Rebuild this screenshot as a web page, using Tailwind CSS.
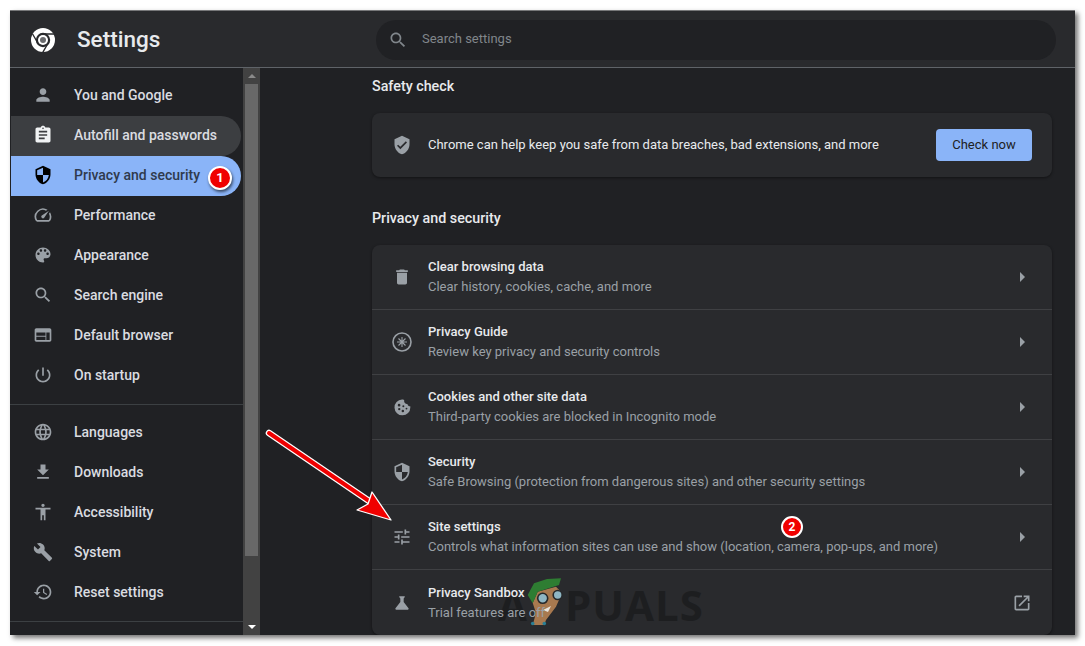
<!DOCTYPE html>
<html lang="en">
<head>
    <meta charset="UTF-8">
    <title>Settings</title>
    <script src="https://cdn.jsdelivr.net/npm/@tailwindcss/browser@4"></script>
</head>
<body class="bg-white font-['Roboto',sans-serif] overflow-hidden">
<div class="pt-[10px] pl-[10px] h-[646px] w-[1085px]">
    <div class="relative w-[1065px] h-[625px] bg-[#202124] border-t border-t-[#77787a] shadow-[3px_3px_5px_rgba(0,0,0,0.55)] overflow-hidden flex flex-col">

        <!-- header -->
        <header class="h-[57px] shrink-0 bg-[#292a2d] border-b border-b-[#5f6368] flex items-center pt-[2px]">
            <svg class="ml-[21px] w-6 h-6 shrink-0" viewBox="0 0 24 24">
                <circle cx="12" cy="12" r="12" fill="#fff"/>
                <path d="M12 6 L23 6 M6.8 15 L1.3 5.5 M17.2 15 L11.7 24.5" stroke="#292a2d" stroke-width="1.4" fill="none"/>
                <circle cx="12" cy="12" r="7.2" fill="#292a2d"/>
                <circle cx="12" cy="12" r="5" fill="#fff"/>
                <circle cx="12" cy="12" r="3" fill="#6a6b6e"/>
            </svg>
            <h1 class="ml-[22px] w-[299px] text-[22.5px] font-medium text-[#e8eaed]">Settings</h1>
            <div class="w-[680px] h-10 rounded-full bg-[#202124] flex items-center pl-[12px]">
                <svg class="w-5 h-5 fill-[#80868b]" viewBox="0 0 24 24"><path d="M15.5 14h-.79l-.28-.27C15.41 12.59 16 11.11 16 9.5 16 5.91 13.09 3 9.5 3S3 5.91 3 9.5 5.91 16 9.5 16c1.61 0 3.09-.59 4.23-1.57l.27.28v.79l5 4.99L20.49 19l-4.99-5zm-6 0C7.01 14 5 11.99 5 9.5S7.01 5 9.5 5 14 7.01 14 9.5 11.99 14 9.5 14z"/></svg>
                <span class="ml-[14px] mb-[2px] text-[13px] text-[#80868b]">Search settings</span>
            </div>
        </header>

        <div class="flex flex-1 min-h-0">
            <!-- sidebar -->
            <nav class="w-[233px] shrink-0 pt-[8px] pr-[2px]">
                <a class="flex items-center h-10 rounded-r-full pb-[2px] pl-[23px] text-[14px] font-medium text-[#dadce0]">
                    <svg class="w-5 h-5 mr-[21px] fill-[#9aa0a6]" viewBox="0 0 24 24"><path d="M12 12c2.21 0 4-1.79 4-4s-1.79-4-4-4-4 1.79-4 4 1.79 4 4 4zm0 2c-2.67 0-8 1.34-8 4v2h16v-2c0-2.66-5.33-4-8-4z"/></svg>You and Google</a>
                <a class="ml-px flex items-center h-10 rounded-r-full pb-[2px] pl-[22px] text-[14px] font-medium text-[#dadce0] bg-[#3c3e41]">
                    <svg class="w-5 h-5 mr-[21px] fill-[#f1f3f4]" viewBox="0 0 24 24"><path d="M19 3h-4.18C14.4 1.84 13.3 1 12 1c-1.3 0-2.4.84-2.82 2H5c-1.1 0-2 .9-2 2v14c0 1.1.9 2 2 2h14c1.1 0 2-.9 2-2V5c0-1.1-.9-2-2-2zm-7 0c.55 0 1 .45 1 1s-.45 1-1 1-1-.45-1-1 .45-1 1-1zm2 14H7v-2h7v2zm3-4H7v-2h10v2zm0-4H7V7h10v2z"/></svg>Autofill and passwords</a>
                <a class="ml-px flex items-center h-10 rounded-r-full pb-[2px] pl-[22px] text-[14px] font-medium text-[#2f3a4d] bg-[#8ab4f8]">
                    <svg class="w-5 h-5 mr-[21px] fill-black" viewBox="0 0 24 24"><path d="M12 1L3 5v6c0 5.55 3.84 10.74 9 12 5.16-1.26 9-6.45 9-12V5l-9-4zm0 10.99h7c-.53 4.12-3.28 7.79-7 8.94V12H5V6.3l7-3.11v8.8z"/></svg>Privacy and security</a>
                <a class="flex items-center h-10 rounded-r-full pb-[2px] pl-[23px] text-[14px] font-medium text-[#dadce0]">
                    <svg class="w-5 h-5 mr-[21px] fill-[#9aa0a6]" viewBox="0 0 24 24"><path d="M20.38 8.57l-1.23 1.85a8 8 0 0 1-.22 7.58H5.07A8 8 0 0 1 15.58 6.85l1.85-1.23A10 10 0 0 0 3.35 19a2 2 0 0 0 1.72 1h13.85a2 2 0 0 0 1.74-1 10 10 0 0 0-.27-10.44zm-9.79 6.84a2 2 0 0 0 2.83 0l5.66-8.49-8.49 5.66a2 2 0 0 0 0 2.83z"/></svg>Performance</a>
                <a class="flex items-center h-10 rounded-r-full pb-[2px] pl-[23px] text-[14px] font-medium text-[#dadce0]">
                    <svg class="w-5 h-5 mr-[21px] fill-[#9aa0a6]" viewBox="0 0 24 24"><path d="M12 3c-4.97 0-9 4.03-9 9s4.03 9 9 9c.83 0 1.5-.67 1.5-1.5 0-.39-.15-.74-.39-1.01-.23-.26-.38-.61-.38-.99 0-.83.67-1.5 1.5-1.5H16c2.76 0 5-2.24 5-5 0-4.42-4.03-8-9-8zm-5.5 9c-.83 0-1.5-.67-1.5-1.5S5.67 9 6.5 9 8 9.67 8 10.5 7.33 12 6.5 12zm3-4C8.67 8 8 7.33 8 6.5S8.67 5 9.5 5s1.5.67 1.5 1.5S10.33 8 9.5 8zm5 0c-.83 0-1.5-.67-1.5-1.5S13.67 5 14.5 5s1.5.67 1.5 1.5S15.33 8 14.5 8zm3 4c-.83 0-1.5-.67-1.5-1.5S16.67 9 17.5 9s1.5.67 1.5 1.5-.67 1.5-1.5 1.5z"/></svg>Appearance</a>
                <a class="flex items-center h-10 rounded-r-full pb-[2px] pl-[23px] text-[14px] font-medium text-[#dadce0]">
                    <svg class="w-5 h-5 mr-[21px] fill-[#9aa0a6]" viewBox="0 0 24 24"><path d="M15.5 14h-.79l-.28-.27C15.41 12.59 16 11.11 16 9.5 16 5.91 13.09 3 9.5 3S3 5.91 3 9.5 5.91 16 9.5 16c1.61 0 3.09-.59 4.23-1.57l.27.28v.79l5 4.99L20.49 19l-4.99-5zm-6 0C7.01 14 5 11.99 5 9.5S7.01 5 9.5 5 14 7.01 14 9.5 11.99 14 9.5 14z"/></svg>Search engine</a>
                <a class="flex items-center h-10 rounded-r-full pb-[2px] pl-[23px] text-[14px] font-medium text-[#dadce0]">
                    <svg class="w-5 h-5 mr-[21px] fill-[#9aa0a6]" viewBox="0 0 24 24"><path d="M20 4H4c-1.1 0-1.99.9-1.99 2L2 18c0 1.1.9 2 2 2h16c1.1 0 2-.9 2-2V6c0-1.1-.9-2-2-2zm-5 14H4v-4h11v4zm0-5H4V9h11v4zm5 5h-4V9h4v9z"/></svg>Default browser</a>
                <a class="flex items-center h-10 rounded-r-full pb-[2px] pl-[23px] text-[14px] font-medium text-[#dadce0]">
                    <svg class="w-5 h-5 mr-[21px] fill-[#9aa0a6]" viewBox="0 0 24 24"><path d="M13 3h-2v10h2V3zm4.83 2.17l-1.42 1.42C17.99 7.86 19 9.81 19 12c0 3.87-3.13 7-7 7s-7-3.13-7-7c0-2.19 1.01-4.14 2.58-5.42L6.17 5.17C4.23 6.82 3 9.26 3 12c0 4.97 4.03 9 9 9s9-4.03 9-9c0-2.74-1.23-5.18-3.17-6.83z"/></svg>On startup</a>

                <div class="mt-[8px] mb-[7px] -mr-[2px] h-px bg-[#3c4043]"></div>

                <a class="flex items-center h-10 rounded-r-full pl-[23px] text-[14px] font-medium text-[#dadce0]">
                    <svg class="w-5 h-5 mr-[21px] fill-[#9aa0a6]" viewBox="0 0 24 24"><path d="M11.99 2C6.47 2 2 6.48 2 12s4.47 10 9.99 10C17.52 22 22 17.52 22 12S17.52 2 11.99 2zm6.93 6h-2.95c-.32-1.25-.78-2.45-1.38-3.56 1.84.63 3.37 1.91 4.33 3.56zM12 4.04c.83 1.2 1.48 2.53 1.91 3.96h-3.82c.43-1.43 1.08-2.76 1.91-3.96zM4.26 14C4.1 13.36 4 12.69 4 12s.1-1.36.26-2h3.38c-.08.66-.14 1.32-.14 2 0 .68.06 1.34.14 2H4.26zm.82 2h2.95c.32 1.25.78 2.45 1.38 3.56-1.84-.63-3.37-1.9-4.33-3.56zm2.95-8H5.08c.96-1.66 2.49-2.93 4.33-3.56C8.81 5.55 8.35 6.75 8.03 8zM12 19.96c-.83-1.2-1.48-2.53-1.91-3.96h3.82c-.43 1.43-1.08 2.76-1.91 3.96zM14.34 14H9.66c-.09-.66-.16-1.32-.16-2 0-.68.07-1.35.16-2h4.68c.09.65.16 1.32.16 2 0 .68-.07 1.34-.16 2zm.25 5.56c.6-1.11 1.06-2.31 1.38-3.56h2.95c-.96 1.65-2.49 2.93-4.33 3.56zM16.36 14c.08-.66.14-1.32.14-2 0-.68-.06-1.34-.14-2h3.38c.16.64.26 1.31.26 2s-.1 1.36-.26 2h-3.38z"/></svg>Languages</a>
                <a class="flex items-center h-10 rounded-r-full pl-[23px] text-[14px] font-medium text-[#dadce0]">
                    <svg class="w-5 h-5 mr-[21px] fill-[#9aa0a6]" viewBox="0 0 24 24"><path d="M19 9h-4V3H9v6H5l7 7 7-7zM5 18v2h14v-2H5z"/></svg>Downloads</a>
                <a class="flex items-center h-10 rounded-r-full pl-[23px] text-[14px] font-medium text-[#dadce0]">
                    <svg class="w-5 h-5 mr-[21px] fill-[#9aa0a6]" viewBox="0 0 24 24"><path d="M12 2c1.1 0 2 .9 2 2s-.9 2-2 2-2-.9-2-2 .9-2 2-2zm9 7h-6v13h-2v-6h-2v6H9V9H3V7h18v2z"/></svg>Accessibility</a>
                <a class="flex items-center h-10 rounded-r-full pl-[23px] text-[14px] font-medium text-[#dadce0]">
                    <svg class="w-5 h-5 mr-[21px] fill-[#9aa0a6]" viewBox="0 0 24 24"><path d="M22.7 19l-9.1-9.1c.9-2.3.4-5-1.5-6.9-2-2-5-2.4-7.4-1.3L9 6 6 9 1.6 4.7C.4 7.1.9 10.1 2.9 12.1c1.9 1.9 4.6 2.4 6.9 1.5l9.1 9.1c.4.4 1 .4 1.4 0l2.3-2.3c.5-.4.5-1.1.1-1.4z"/></svg>System</a>
                <a class="flex items-center h-10 rounded-r-full pl-[23px] text-[14px] font-medium text-[#dadce0]">
                    <svg class="w-5 h-5 mr-[21px] fill-[#9aa0a6]" viewBox="0 0 24 24"><path d="M13 3c-4.97 0-9 4.03-9 9H1l3.89 3.89.07.14L9 12H6c0-3.87 3.13-7 7-7s7 3.13 7 7-3.13 7-7 7c-1.93 0-3.68-.79-4.94-2.06l-1.42 1.42C8.27 19.99 10.51 21 13 21c4.97 0 9-4.03 9-9s-4.03-9-9-9zm-1 5v5l4.28 2.54.72-1.21-3.5-2.08V8H12z"/></svg>Reset settings</a>

                <div class="mt-[9px] -mr-[2px] h-px bg-[#3c4043]"></div>
            </nav>

            <!-- scrollbar -->
            <div class="w-[17px] shrink-0 bg-[#424242] flex flex-col items-center">
                <div class="h-4 flex items-center justify-center">
                    <div class="w-0 h-0 border-x-[4px] border-x-transparent border-b-[4px] border-b-[#8a8a8a]"></div>
                </div>
                <div class="w-[13px] h-[472px] bg-[#686868]"></div>
                <div class="mt-auto h-4 flex items-center justify-center">
                    <div class="w-0 h-0 border-x-[4px] border-x-transparent border-t-[4px] border-t-white"></div>
                </div>
            </div>

            <!-- main -->
            <main class="flex-1 min-w-0 pl-[112px] pt-2 overflow-hidden">
                <div class="w-[680px]">
                    <h2 class="text-[14.3px] leading-5 font-medium text-[#e8eaed]">Safety check</h2>
                    <div class="mt-[17px] h-16 bg-[#292a2d] rounded-lg shadow-[0_1px_3px_rgba(0,0,0,0.45)] flex items-center pl-5 pr-5">
                        <svg class="w-5 h-5 shrink-0 fill-[#9aa0a6]" viewBox="0 0 24 24"><path d="M12 1L3 5v6c0 5.55 3.84 10.74 9 12 5.16-1.26 9-6.45 9-12V5l-9-4zm-2 16l-4-4 1.41-1.41L10 14.17l6.59-6.59L18 9l-8 8z"/></svg>
                        <span class="ml-4 text-[13px] text-[#e8eaed]">Chrome can help keep you safe from data breaches, bad extensions, and more</span>
                        <button class="ml-auto w-24 h-8 rounded bg-[#8ab4f8] text-[13px] font-normal text-[#202124]">Check now</button>
                    </div>

                    <h2 class="mt-[31px] text-[14.3px] leading-5 font-medium text-[#e8eaed]">Privacy and security</h2>
                    <div class="mt-[17px] bg-[#292a2d] rounded-lg shadow-[0_1px_3px_rgba(0,0,0,0.45)] divide-y divide-[#3f4043]">
                        <div class="h-[65px] flex items-center px-5">
                            <svg class="w-5 h-5 shrink-0 fill-[#9aa0a6]" viewBox="0 0 24 24"><path d="M6 19c0 1.1.9 2 2 2h8c1.1 0 2-.9 2-2V7H6v12zM19 4h-3.5l-1-1h-5l-1 1H5v2h14V4z"/></svg>
                            <div class="ml-4 flex-1">
                                <div class="text-[13px] leading-5 font-medium text-[#e8eaed]">Clear browsing data</div>
                                <div class="text-[13px] leading-5 text-[#9aa0a6]">Clear history, cookies, cache, and more</div>
                            </div>
                            <div class="w-5 flex justify-center"><div class="w-0 h-0 border-y-[5px] border-y-transparent border-l-[5px] border-l-[#9aa0a6]"></div></div>
                        </div>
                        <div class="h-[65px] flex items-center px-5">
                            <svg class="w-5 h-5 shrink-0" viewBox="0 0 20 20" fill="none" stroke="#9aa0a6"><circle cx="10" cy="10" r="9" stroke-width="1.6"/><path d="M10 5v10M5 10h10M6.5 6.5l7 7M13.5 6.5l-7 7" stroke-width="1.1"/></svg>
                            <div class="ml-4 flex-1">
                                <div class="text-[13px] leading-5 font-medium text-[#e8eaed]">Privacy Guide</div>
                                <div class="text-[13px] leading-5 text-[#9aa0a6]">Review key privacy and security controls</div>
                            </div>
                            <div class="w-5 flex justify-center"><div class="w-0 h-0 border-y-[5px] border-y-transparent border-l-[5px] border-l-[#9aa0a6]"></div></div>
                        </div>
                        <div class="h-[65px] flex items-center px-5">
                            <svg class="w-5 h-5 shrink-0 fill-[#9aa0a6]" viewBox="0 0 24 24"><path fill-rule="evenodd" d="M21.9 11.2c-1.7 0-3.2-1.2-3.4-2.9-1.9.3-3.6-1.1-3.9-3-.1-.5 0-1 .1-1.4C13.6 3 12.8 3 12 3a9.5 9.5 0 1 0 10 9.5c0-.4 0-.9-.1-1.3zM8.5 8.2a1.6 1.6 0 1 1 0 3.2 1.6 1.6 0 0 1 0-3.2zm-1.2 6.3a1.4 1.4 0 1 1 2.8 0 1.4 1.4 0 0 1-2.8 0zm5.7 3.7a1.5 1.5 0 1 1 0-3 1.5 1.5 0 0 1 0 3zm.6-5.8a1.2 1.2 0 1 1 0-2.4 1.2 1.2 0 0 1 0 2.4zm3.8 2.6a1.1 1.1 0 1 1 0-2.2 1.1 1.1 0 0 1 0 2.2z"/></svg>
                            <div class="ml-4 flex-1">
                                <div class="text-[13px] leading-5 font-medium text-[#e8eaed]">Cookies and other site data</div>
                                <div class="text-[13px] leading-5 text-[#9aa0a6]">Third-party cookies are blocked in Incognito mode</div>
                            </div>
                            <div class="w-5 flex justify-center"><div class="w-0 h-0 border-y-[5px] border-y-transparent border-l-[5px] border-l-[#9aa0a6]"></div></div>
                        </div>
                        <div class="h-[65px] flex items-center px-5">
                            <svg class="w-5 h-5 shrink-0 fill-[#9aa0a6]" viewBox="0 0 24 24"><path d="M12 1L3 5v6c0 5.55 3.84 10.74 9 12 5.16-1.26 9-6.45 9-12V5l-9-4zm0 10.99h7c-.53 4.12-3.28 7.79-7 8.94V12H5V6.3l7-3.11v8.8z"/></svg>
                            <div class="ml-4 flex-1">
                                <div class="text-[13px] leading-5 font-medium text-[#e8eaed]">Security</div>
                                <div class="text-[13px] leading-5 text-[#9aa0a6]">Safe Browsing (protection from dangerous sites) and other security settings</div>
                            </div>
                            <div class="w-5 flex justify-center"><div class="w-0 h-0 border-y-[5px] border-y-transparent border-l-[5px] border-l-[#9aa0a6]"></div></div>
                        </div>
                        <div class="h-[65px] flex items-center px-5">
                            <svg class="w-5 h-5 shrink-0 fill-[#9aa0a6]" viewBox="0 0 24 24"><path d="M3 17v2h6v-2H3zM3 5v2h10V5H3zm10 16v-2h8v-2h-8v-2h-2v6h2zM7 9v2H3v2h4v2h2V9H7zm14 4v-2H11v2h10zm-6-4h2V7h4V5h-4V3h-2v6z"/></svg>
                            <div class="ml-4 flex-1">
                                <div class="text-[13px] leading-5 font-medium text-[#e8eaed]">Site settings</div>
                                <div class="text-[13px] leading-5 text-[#9aa0a6]">Controls what information sites can use and show (location, camera, pop-ups, and more)</div>
                            </div>
                            <div class="w-5 flex justify-center"><div class="w-0 h-0 border-y-[5px] border-y-transparent border-l-[5px] border-l-[#9aa0a6]"></div></div>
                        </div>
                        <div class="h-[65px] flex items-center px-5">
                            <svg class="w-5 h-5 shrink-0 fill-[#9aa0a6]" viewBox="0 0 24 24"><path d="M19.8 18.4L14 10.67V6.5l1.35-1.69c.26-.33.03-.81-.39-.81H9.04c-.42 0-.65.48-.39.81L10 6.5v4.17L4.2 18.4c-.49.66-.02 1.6.8 1.6h14c.82 0 1.29-.94.8-1.6z"/></svg>
                            <div class="relative z-[2] ml-4 flex-1">
                                <div class="text-[13px] leading-5 font-medium text-[#e8eaed]">Privacy Sandbox</div>
                                <div class="text-[13px] leading-5 text-[#9aa0a6]">Trial features are off</div>
                            </div>
                            <svg class="w-5 h-5 shrink-0 fill-[#9aa0a6]" viewBox="0 0 24 24"><path d="M19 19H5V5h7V3H5c-1.11 0-2 .9-2 2v14c0 1.1.89 2 2 2h14c1.1 0 2-.9 2-2v-7h-2v7zM14 3v2h3.59l-9.83 9.83 1.41 1.41L19 6.41V10h2V3h-7z"/></svg>
                        </div>
                    </div>
                </div>
            </main>
        </div>

        <!-- annotation badges -->
        <div class="absolute left-[198px] top-[155px] w-6 h-6 rounded-full bg-[#f00000] border-2 border-white shadow-[1px_2px_3px_rgba(0,0,0,0.6)] flex items-center justify-center text-[13px] font-bold text-white">1</div>
        <div class="absolute left-[771px] top-[505px] w-[22px] h-[22px] rounded-full bg-[#f00000] border-2 border-white flex items-center justify-center text-[12px] font-bold text-white">2</div>

        <!-- annotation arrow -->
        <svg class="absolute left-[250px] top-[410px] w-[140px] h-[110px]" viewBox="0 0 140 110">
            <path d="M19 23 L122 93" transform="translate(-10 -11)" stroke="#fff" stroke-width="6.5" stroke-linecap="round"/>
            <path d="M19 23 L122 93" transform="translate(-10 -11)" stroke="#f00000" stroke-width="4" stroke-linecap="round"/>
            <path d="M131 99 L97 89 L108 83 L112 71 Z" fill="#f00000" stroke="#fff" stroke-width="1.3" stroke-linejoin="round"/>
        </svg>

        <!-- watermark -->
        <div class="absolute z-[1] left-[488px] top-[566px] h-[50px] flex items-center text-[42px] leading-none font-bold font-['Open_Sans',sans-serif] text-[#1d1e20]">
            <span class="mt-[6px]">A</span>
            <svg class="w-[38px] h-[50px] shrink-0" viewBox="0 0 38 50">
                <path d="M5.7 26 L10.7 14.7 L29 9.7 L35 16 L29 29.7 L19 43 L17.3 48 L5.7 48 L9 36 Z" fill="#a8794f"/>
                <path d="M0.7 18 L7 6.3 L20 2 L34 1.3 L32 8 L10.7 14.7 L5.7 26.3 Z" fill="#2e7d32"/>
                <circle cx="15.7" cy="21.3" r="5" fill="#8fb6c4" stroke="#26282a" stroke-width="1.6"/>
                <circle cx="30.7" cy="18" r="4.5" fill="#8fb6c4" stroke="#26282a" stroke-width="1.6"/>
                <path d="M16 33 L24 29 L21 35 Z" fill="#e8e4dc"/>
                <circle cx="5.7" cy="46.5" r="1.8" fill="#2a7f95"/>
                <circle cx="17.3" cy="46.5" r="1.8" fill="#2a7f95"/>
            </svg>
            <span class="mt-[6px] tracking-[1px]">PUALS</span>
        </div>
    </div>
</div>
</body>
</html>
